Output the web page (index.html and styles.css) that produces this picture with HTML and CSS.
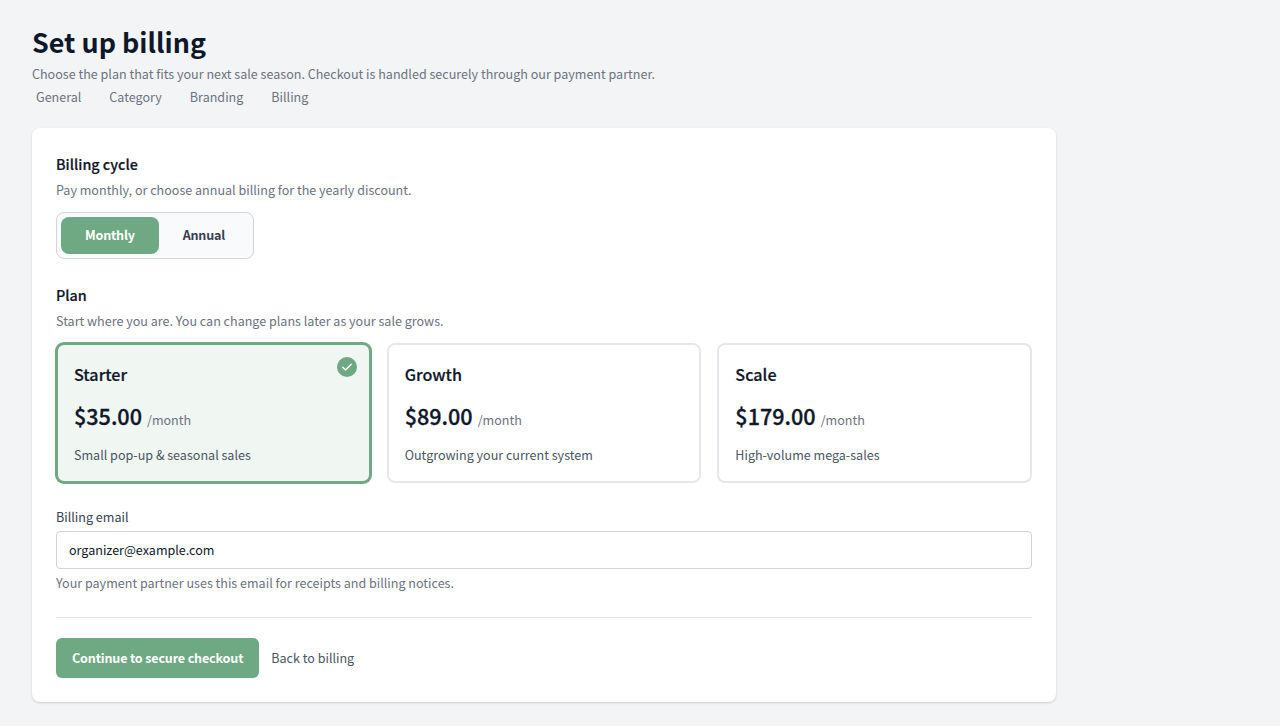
FILE: index.html
```html
<!DOCTYPE html>
<html lang="en">
<head>
    <meta charset="UTF-8">
    <title>Set up billing</title>
    <link rel="stylesheet" href="styles.css">
</head>
<body>
    <main class="page">
        <header class="page-header">
            <h1>Set up billing</h1>
            <p>Choose the plan that fits your next sale season. Checkout is handled securely through our payment partner.</p>
            <nav class="steps">
                <span>General</span>
                <span>Category</span>
                <span>Branding</span>
                <span>Billing</span>
            </nav>
        </header>

        <form class="card">
            <section class="cycle-section">
                <h2>Billing cycle</h2>
                <p class="hint">Pay monthly, or choose annual billing for the yearly discount.</p>
                <div class="toggle">
                    <button type="button" class="active">Monthly</button>
                    <button type="button">Annual</button>
                </div>
            </section>

            <section class="plan-section">
                <h2>Plan</h2>
                <p class="hint">Start where you are. You can change plans later as your sale grows.</p>
                <div class="plans">
                    <div class="plan selected">
                        <svg class="check" viewBox="0 0 20 20" width="20" height="20">
                            <circle cx="10" cy="10" r="10" fill="#6ea983"/>
                            <path d="M5.8 10.2l2.8 2.8 5.6-5.8" fill="none" stroke="#fff" stroke-width="1.4" stroke-linecap="round" stroke-linejoin="round"/>
                        </svg>
                        <h3>Starter</h3>
                        <div class="price"><strong>$35.00</strong> <span>/month</span></div>
                        <p>Small pop-up &amp; seasonal sales</p>
                    </div>
                    <div class="plan">
                        <h3>Growth</h3>
                        <div class="price"><strong>$89.00</strong> <span>/month</span></div>
                        <p>Outgrowing your current system</p>
                    </div>
                    <div class="plan">
                        <h3>Scale</h3>
                        <div class="price"><strong>$179.00</strong> <span>/month</span></div>
                        <p>High-volume mega-sales</p>
                    </div>
                </div>
            </section>

            <section class="email-section">
                <label for="email">Billing email</label>
                <input type="email" id="email" value="organizer@example.com">
                <p class="hint">Your payment partner uses this email for receipts and billing notices.</p>
            </section>

            <div class="actions">
                <button type="button" class="primary-btn">Continue to secure checkout</button>
                <a class="back-link">Back to billing</a>
            </div>
        </form>
    </main>
</body>
</html>
```

FILE: styles.css
```css
* {
    box-sizing: border-box;
}
body {
    margin: 0;
    background-color: #f3f4f6;
    color: #0f172a;
    font-family: 'Noto Sans CJK JP', 'Noto Sans CJK SC', sans-serif;
    font-size: 12.55px;
    line-height: 20px;
}
h1, h2, h3, p {
    margin: 0;
}
button, input {
    font: inherit;
}
.page {
    width: 1088px;
    padding: 24px 32px;
}
.page-header {
    color: #6b7280;
}
.page-header h1 {
    font-size: 26.9px;
    line-height: 36px;
    font-weight: 700;
    color: #0f172a;
    margin-bottom: 4px;
}
.steps {
    display: flex;
    gap: 28px;
    padding: 3px 4px 0;
}
.card {
    height: 574px;
    margin-top: 21px;
    padding: 24px;
    background-color: #fff;
    border-radius: 8px;
    box-shadow: 0 1px 3px rgba(0,0,0,0.1), 0 1px 2px rgba(0,0,0,0.06);
}
h2 {
    font-size: 14.35px;
    line-height: 24px;
    font-weight: 500;
    -webkit-text-stroke: 0.2px;
}
.hint {
    margin-top: 4px;
    color: #6b7280;
}
.toggle {
    display: inline-flex;
    margin-top: 12px;
    padding: 4px;
    border: 1px solid #d1d5db;
    border-radius: 8px;
    background-color: #f9fafb;
}
.toggle button {
    height: 37px;
    padding: 0 24px 1px;
    border: none;
    border-radius: 8px;
    background: none;
    color: #374151;
    font-weight: 700;
    letter-spacing: -0.2px;
}
.toggle .active {
    background-color: #6ea983;
    color: #fff;
}
.plan-section {
    margin-top: 24px;
}
.plans {
    display: grid;
    grid-template-columns: repeat(3, 1fr);
    gap: 16px;
    margin-top: 12px;
}
.plan {
    position: relative;
    height: 140px;
    padding: 15px 16px 16px;
    border: 2px solid #e5e7eb;
    border-radius: 8px;
}
.plan.selected {
    border-color: #6ea983;
    background-color: #f0f6f2;
    box-shadow: 0 0 0 1px #6ea983;
}
.check {
    position: absolute;
    top: 12px;
    right: 12px;
}
.plan h3 {
    font-size: 16.15px;
    line-height: 28px;
    font-weight: 500;
    -webkit-text-stroke: 0.2px;
}
.price {
    display: flex;
    align-items: baseline;
    gap: 5px;
    margin-top: 12px;
    line-height: 32px;
    color: #6b7280;
}
.price strong {
    font-size: 21.6px;
    font-weight: 500;
    color: #0f172a;
    -webkit-text-stroke: 0.3px;
}
.plan p {
    margin-top: 9px;
    color: #4b5563;
}
.email-section {
    margin-top: 24px;
}
.email-section label {
    display: block;
    color: #374151;
}
.email-section input {
    display: block;
    width: 100%;
    height: 38px;
    margin-top: 4px;
    padding: 0 12px 2px;
    border: 1px solid #d1d5db;
    border-radius: 4px;
    color: #0f172a;
}
.actions {
    display: flex;
    align-items: center;
    gap: 12px;
    margin-top: 24px;
    padding-top: 20px;
    border-top: 1px solid #e5e7eb;
}
.primary-btn {
    height: 40px;
    padding: 0 16px;
    border: none;
    border-radius: 6px;
    background-color: #6ea983;
    color: #fff;
    font-weight: 700;
    letter-spacing: -0.16px;
    box-shadow: 0 1px 2px rgba(0,0,0,0.05);
}
.back-link {
    color: #4b5563;
}
```
